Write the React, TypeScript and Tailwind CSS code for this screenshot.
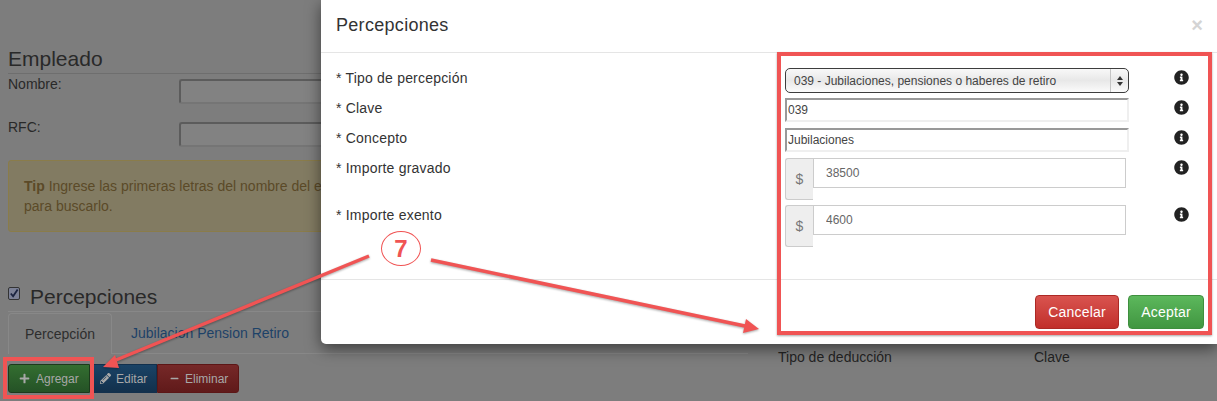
import React from 'react';
import { FaInfoCircle, FaMinus, FaPencilAlt, FaPlus } from 'react-icons/fa';

const rows = [
  { label: '* Tipo de percepción', kind: 'select', value: '039 - Jubilaciones, pensiones o haberes de retiro' },
  { label: '* Clave', kind: 'text', value: '039' },
  { label: '* Concepto', kind: 'text', value: 'Jubilaciones' },
  { label: '* Importe gravado', kind: 'money', value: '38500' },
  { label: '* Importe exento', kind: 'money', value: '4600' },
];

const rowHeight: Record<string, string> = {
  select: 'h-[30px]',
  text: 'h-[30px]',
  money: 'h-[47px]',
};

const Control: React.FC<{ kind: string; value: string }> = ({ kind, value }) => {
  if (kind === 'select') {
    return (
      <div className="flex h-[25px] w-[344px] items-center rounded-[5px] border border-[#3d3d3d] bg-gradient-to-b from-[#f8f8f8] via-[#e8e8e8] to-[#fbfbfb] text-[12px] text-[#444]">
        <span className="flex-1 pl-2">{value}</span>
        <span className="flex h-full w-[18px] flex-col items-center justify-center gap-[2px] border-l border-[#c4c4c4]">
          <svg width="6" height="4" viewBox="0 0 6 4"><path d="M3 0 6 4H0z" fill="#333" /></svg>
          <svg width="6" height="4" viewBox="0 0 6 4"><path d="M3 4 0 0h6z" fill="#333" /></svg>
        </span>
      </div>
    );
  }
  if (kind === 'text') {
    return (
      <input
        readOnly
        value={value}
        className="h-[24px] w-[344px] border-2 border-t-[#999] border-l-[#999] border-r-[#efefef] border-b-[#efefef] bg-white pl-[1px] text-[12px] text-[#444] outline-none"
      />
    );
  }
  return (
    <div className="flex w-[341px] items-start">
      <span className="flex h-[42px] w-[28px] items-center justify-center rounded-l-[3px] border-b border-l border-t border-[#ccc] bg-[#eee] text-[14px] text-[#777]">
        $
      </span>
      <input
        readOnly
        value={value}
        className="h-[30px] flex-1 border border-[#ccc] bg-white pl-[12px] text-[12px] text-[#666] outline-none"
      />
    </div>
  );
};

const App: React.FC = () => {
  return (
    <div className="relative h-[401px] w-[1217px] overflow-hidden bg-[#7d7d7d] font-['Liberation_Sans',Arial,sans-serif] text-[14px] text-[#292929]">
      {/* pagina detras del modal */}
      <div className="flex pl-2">
        <div className="w-[740px]">
          <h2 className="mt-[45px] h-[29px] border-b border-[#6e6e6e] text-[21px] leading-[28px]">Empleado</h2>
          <div className="flex h-[48px] pt-[5px]">
            <label className="w-[171px] leading-[11px]">Nombre:</label>
            <div className="h-[25px] w-[400px] rounded-[3px] border-2 border-b-[#757575] border-l-[#5c5c5c] border-r-[#757575] border-t-[#5c5c5c] bg-[#828282]" />
          </div>
          <div className="flex h-[38px]">
            <label className="w-[171px] leading-[11px]">RFC:</label>
            <div className="h-[25px] w-[400px] rounded-[3px] border-2 border-b-[#757575] border-l-[#5c5c5c] border-r-[#757575] border-t-[#5c5c5c] bg-[#828282]" />
          </div>
          <div className="h-[72px] rounded-[3px] border border-[#8a7c4a] bg-[#827b62] px-[15px] py-[15px] leading-[20px] text-[#5b4a28]">
            <b>Tip</b> Ingrese las primeras letras del nombre del empleado
            <br />
            para buscarlo.
          </div>
          <div className="mt-[50px] flex h-[30px] items-start border-b border-[#888]">
            <span className="mt-[5px] flex h-[13px] w-[12px] items-center justify-center rounded-[2px] border border-[#333] bg-[#7c8196]">
              <svg width="11" height="11" viewBox="0 0 11 11"><path d="M2 5.5 4.5 8.5 9.5 1" fill="none" stroke="#1b2440" strokeWidth="2" /></svg>
            </span>
            <span className="ml-[10px] text-[21px] leading-[29px]">Percepciones</span>
          </div>
          <div className="mt-[1px] flex h-[41px] border-b border-[#888]">
            <span className="flex h-[41px] w-[104px] items-center justify-center rounded-t-[4px] border border-b-0 border-[#888] bg-[#7d7d7d] text-[#2e2e2e]">
              Percepción
            </span>
            <span className="flex h-[40px] items-center pl-[19px] text-[#1d4268]">Jubilacion Pension Retiro</span>
          </div>
          <div className="mt-[10px] flex h-[29px] text-[12px] text-[#a8a8a8]">
            <span className="flex w-[82px] items-center gap-[6px] rounded-l-[3px] border border-[#1c3a1c] bg-gradient-to-b from-[#336e30] to-[#255226] pl-[10px]">
              <FaPlus className="text-[11px]" /> Agregar
            </span>
            <span className="flex w-[67px] items-center gap-[5px] border border-[#12304d] bg-gradient-to-b from-[#1a4366] to-[#12304c] pl-[9px]">
              <FaPencilAlt className="text-[11px]" /> Editar
            </span>
            <span className="flex w-[82px] items-center gap-[6px] rounded-r-[3px] border border-[#5c1616] bg-gradient-to-b from-[#762828] to-[#601a1a] pl-[12px]">
              <FaMinus className="text-[9px]" /> Eliminar
            </span>
          </div>
        </div>
        <div className="ml-[30px] flex pt-[347px] leading-[20px] text-[#242424]">
          <span className="w-[256px]">Tipo de deducción</span>
          <span>Clave</span>
        </div>
      </div>

      {/* modal */}
      <div className="absolute right-0 top-0 w-[896px] rounded-bl-[5px] bg-white text-[#333] shadow-[0_5px_15px_rgba(0,0,0,0.5)]">
        <div className="flex h-[53px] items-center justify-between border-b border-[#e5e5e5] pb-[2px] pl-[15px] pr-[14px]">
          <h3 className="text-[18px] tracking-[0.3px]">Percepciones</h3>
          <span className="text-[20px] font-bold leading-none text-[#d4d4d4]">×</span>
        </div>
        <div className="pb-[27px] pl-[15px] pt-[15px]">
          {rows.map((row) => (
            <div key={row.label} className={`flex ${rowHeight[row.kind]}`}>
              <span className="w-[449px] leading-[20px] tracking-[0.2px]">{row.label}</span>
              <div className="w-[389px]">
                <Control kind={row.kind} value={row.value} />
              </div>
              <FaInfoCircle className="mt-[2px] text-[15px] text-[#222]" />
            </div>
          ))}
        </div>
        <div className="flex h-[65px] justify-end gap-[9px] border-t border-[#e5e5e5] pr-[13px] pt-[15px]">
          <button className="h-[34px] w-[84px] rounded-[4px] border border-[#ac2925] bg-gradient-to-b from-[#d9534f] to-[#c12e2a] tracking-[0.2px] text-white">
            Cancelar
          </button>
          <button className="h-[34px] w-[76px] rounded-[4px] border border-[#3e8f3e] bg-gradient-to-b from-[#5cb85c] to-[#419641] tracking-[0.2px] text-white">
            Aceptar
          </button>
        </div>
      </div>

      {/* anotaciones */}
      <div className="absolute left-[3px] top-[357px] h-[42px] w-[91px] border-[4px] border-[#f05454]" />
      <div className="absolute left-[777px] top-[52px] h-[283px] w-[435px] border-[4px] border-[#f05454] shadow-[0_1px_2px_rgba(0,0,0,0.35)]" />
      <svg className="absolute left-0 top-0 drop-shadow-[0_1px_1px_rgba(0,0,0,0.35)]" width="1217" height="401" viewBox="0 0 1217 401">
        <path d="M369 256 116 360" stroke="#f05454" strokeWidth="3.5" fill="none" />
        <path d="M103 367 115 355 119 368z" fill="#f05454" />
        <path d="M431 260 745 326" stroke="#f05454" strokeWidth="3.5" fill="none" />
        <path d="M759 329 746 319 743 333z" fill="#f05454" />
      </svg>
      <div className="absolute left-[381px] top-[231px] flex h-[35px] w-[40px] items-center justify-center rounded-[50%] border border-[#f05454] bg-white text-[24px] font-bold text-[#f05454]">
        7
      </div>
    </div>
  );
};

export default App;
